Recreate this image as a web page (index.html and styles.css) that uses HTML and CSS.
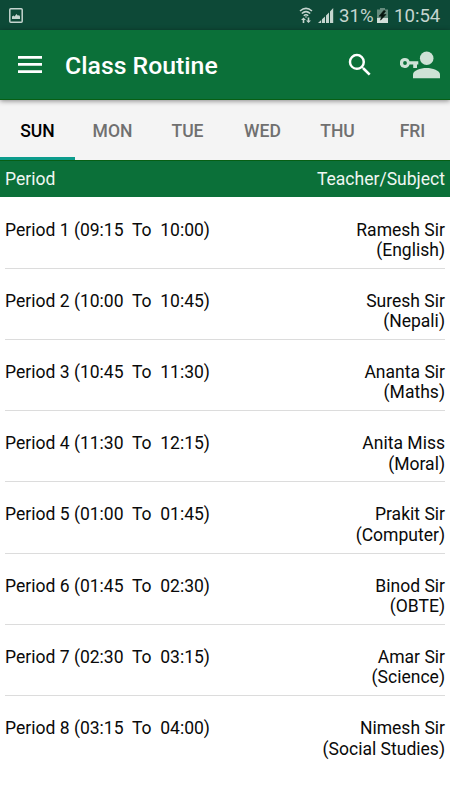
FILE: index.html
```html
<!DOCTYPE html>
<html lang="en">

<head>
  <meta charset="UTF-8">
  <meta name="viewport" content="width=device-width, initial-scale=1.0">
  <title>Class Routine</title>
  <link rel="stylesheet" href="styles.css">
</head>

<body>
  <div class="status-bar">
    <svg class="picture" width="14" height="15" viewBox="0 0 14 15">
      <rect x="0.8" y="0.8" width="12.4" height="13.4" rx="1" fill="none" stroke="#c5d5cf" stroke-width="1.5" />
      <path d="M3 11V8.6L4.5 7.6L5.6 8.4L7.4 6L9 7.8L10 7L11 8.6V11z" fill="#c5d5cf" />
    </svg>
    <div class="status-right">
      <svg class="wifi" width="14" height="17" viewBox="0 0 14 17">
        <g fill="none" stroke="#c5d5cf" stroke-width="1.5">
          <path d="M1 4Q7 -1.2 13 4" />
          <path d="M2.8 6.5Q7 2.8 11.2 6.5" />
          <path d="M4.8 8.8Q7 6.8 9.2 8.8" />
        </g>
        <path d="M5.7 9.5h2.6L7 11z" fill="#c5d5cf" />
        <path d="M4.5 10.5L7 13H5.3V16H3.7V13H2zM9.5 16L7 13.5H8.7V10.5H10.3V13.5H12z" fill="#c5d5cf" />
      </svg>
      <svg class="signal" width="16" height="15" viewBox="0 0 16 15">
        <path d="M0 15L3.2 12V15zM4 11.2L7 8.4V15H4zM8 7.4L11 4.6V15H8zM12 3.5L15.2 0V15H12z" fill="#c5d5cf" />
      </svg>
      <span class="percent">31%</span>
      <svg class="battery" width="11" height="15" viewBox="0 0 11 15">
        <path d="M3 0H8V1.5H11V10H0V1.5H3z" fill="#668c7e" />
        <path d="M0 10H11V15H0z" fill="#d3dfda" />
        <path d="M6.8 2.5L2 8.2H4.6L3.5 12.2L9 6.5H6.2L8.5 3z" fill="#06150f" stroke="#06150f" stroke-width="0.6" />
      </svg>
      <span class="clock">10:54</span>
    </div>
  </div>

  <header class="toolbar">
    <svg class="menu" width="24" height="17" viewBox="0 0 24 17">
      <path d="M0 0H24V2.7H0zM0 7.1H24V9.8H0zM0 14.2H24V16.9H0z" fill="#fff" />
    </svg>
    <h1>Class Routine</h1>
    <svg class="search" width="30" height="30" viewBox="0 0 24 24">
      <path d="M15.5 14h-.79l-.28-.27A6.47 6.47 0 0 0 16 9.5 6.5 6.5 0 1 0 9.5 16c1.61 0 3.09-.59 4.23-1.57l.27.28v.79l5 4.99L20.49 19l-4.99-5zm-6 0C7.01 14 5 11.99 5 9.5S7.01 5 9.5 5 14 7.01 14 9.5 11.99 14 9.5 14z" fill="#fff" />
    </svg>
    <svg class="account" width="40" height="28" viewBox="0 0 40 28">
      <g fill="#cee2d6">
        <circle cx="26.7" cy="7.2" r="6.8" />
        <path d="M13 27.3V23.5C13 19.5 20.5 17 26.5 17S40 19.5 40 23.5V27.3z" />
        <path fill-rule="evenodd" d="M5 7A5 5 0 0 1 9.6 10.2H18.3V13.6H17V17H13.2V13.6H9.6A5 5 0 1 1 5 7zM5 10.1A1.9 1.9 0 1 0 5 13.9A1.9 1.9 0 0 0 5 10.1z" />
      </g>
    </svg>
  </header>

  <nav class="tabs">
    <a class="tab active">SUN</a>
    <a class="tab">MON</a>
    <a class="tab">TUE</a>
    <a class="tab">WED</a>
    <a class="tab">THU</a>
    <a class="tab">FRI</a>
  </nav>

  <div class="list-head">
    <span>Period</span>
    <span>Teacher/Subject</span>
  </div>

  <ul class="routine">
    <li>
      <span class="period">Period 1 (09:15  To  10:00)</span>
      <span class="teacher">Ramesh Sir<br>(English)</span>
    </li>
    <li>
      <span class="period">Period 2 (10:00  To  10:45)</span>
      <span class="teacher">Suresh Sir<br>(Nepali)</span>
    </li>
    <li>
      <span class="period">Period 3 (10:45  To  11:30)</span>
      <span class="teacher">Ananta Sir<br>(Maths)</span>
    </li>
    <li>
      <span class="period">Period 4 (11:30  To  12:15)</span>
      <span class="teacher">Anita Miss<br>(Moral)</span>
    </li>
    <li>
      <span class="period">Period 5 (01:00  To  01:45)</span>
      <span class="teacher">Prakit Sir<br>(Computer)</span>
    </li>
    <li>
      <span class="period">Period 6 (01:45  To  02:30)</span>
      <span class="teacher">Binod Sir<br>(OBTE)</span>
    </li>
    <li>
      <span class="period">Period 7 (02:30  To  03:15)</span>
      <span class="teacher">Amar Sir<br>(Science)</span>
    </li>
    <li>
      <span class="period">Period 8 (03:15  To  04:00)</span>
      <span class="teacher">Nimesh Sir<br>(Social Studies)</span>
    </li>
  </ul>
</body>

</html>
```

FILE: styles.css
```css
* {
  box-sizing: border-box;
}

body {
  margin: 0;
  height: 800px;
  overflow: hidden;
  background: #fff;
  color: #0a0a0a;
  font-family: Roboto, sans-serif;
  font-size: 17.55px;
}

svg {
  display: block;
  flex: none;
}

.status-bar {
  display: flex;
  align-items: center;
  justify-content: space-between;
  height: 30px;
  padding: 0 10px 0 9px;
  background: #0d4937;
  color: #c5d5cf;
}

.status-right {
  display: flex;
  align-items: center;
  font-size: 18.6px;
  line-height: 30px;
}

.signal {
  margin-left: 5px;
}

.percent {
  width: 36px;
  margin: 2px 0 0 5px;
}

.battery {
  margin-left: 2px;
}

.clock {
  width: 46px;
  margin: 2px 0 0 6px;
}

.toolbar {
  position: relative;
  display: flex;
  align-items: center;
  height: 70px;
  padding: 0 10px 0 18px;
  background: #0b7039;
  border-bottom: 1px solid #075f14;
  box-shadow: 0 1px 5px rgba(0, 0, 0, 0.45);
}

.toolbar h1 {
  flex: 1;
  margin: 1px 0 0 23px;
  color: #fff;
  font-size: 24.8px;
  font-weight: 500;
}

.account {
  margin-left: 25px;
}

.tabs {
  display: flex;
  height: 60px;
  background: #f4f4f4;
}

.tab {
  flex: 1;
  padding-top: 2px;
  border-bottom: 3px solid transparent;
  color: #707070;
  font-weight: 500;
  line-height: 58px;
  text-align: center;
}

.tab.active {
  color: #000;
  border-color: #0c9c8c;
}

.list-head {
  display: flex;
  justify-content: space-between;
  height: 37px;
  padding: 1px 5px 0;
  border-top: 1px solid #075f14;
  background: #0b7039;
  color: #f0f7f2;
  line-height: 35px;
}

.routine {
  margin: 0;
  padding: 0.5px 5px 0;
  list-style: none;
}

.routine li {
  display: flex;
  justify-content: space-between;
  height: 71.22px;
  padding-top: 22px;
  border-bottom: 1px solid #dcdcdc;
  line-height: 20.5px;
}

.routine li:last-child {
  border-bottom: none;
}

.period {
  white-space: pre;
}

.teacher {
  text-align: right;
}
```
